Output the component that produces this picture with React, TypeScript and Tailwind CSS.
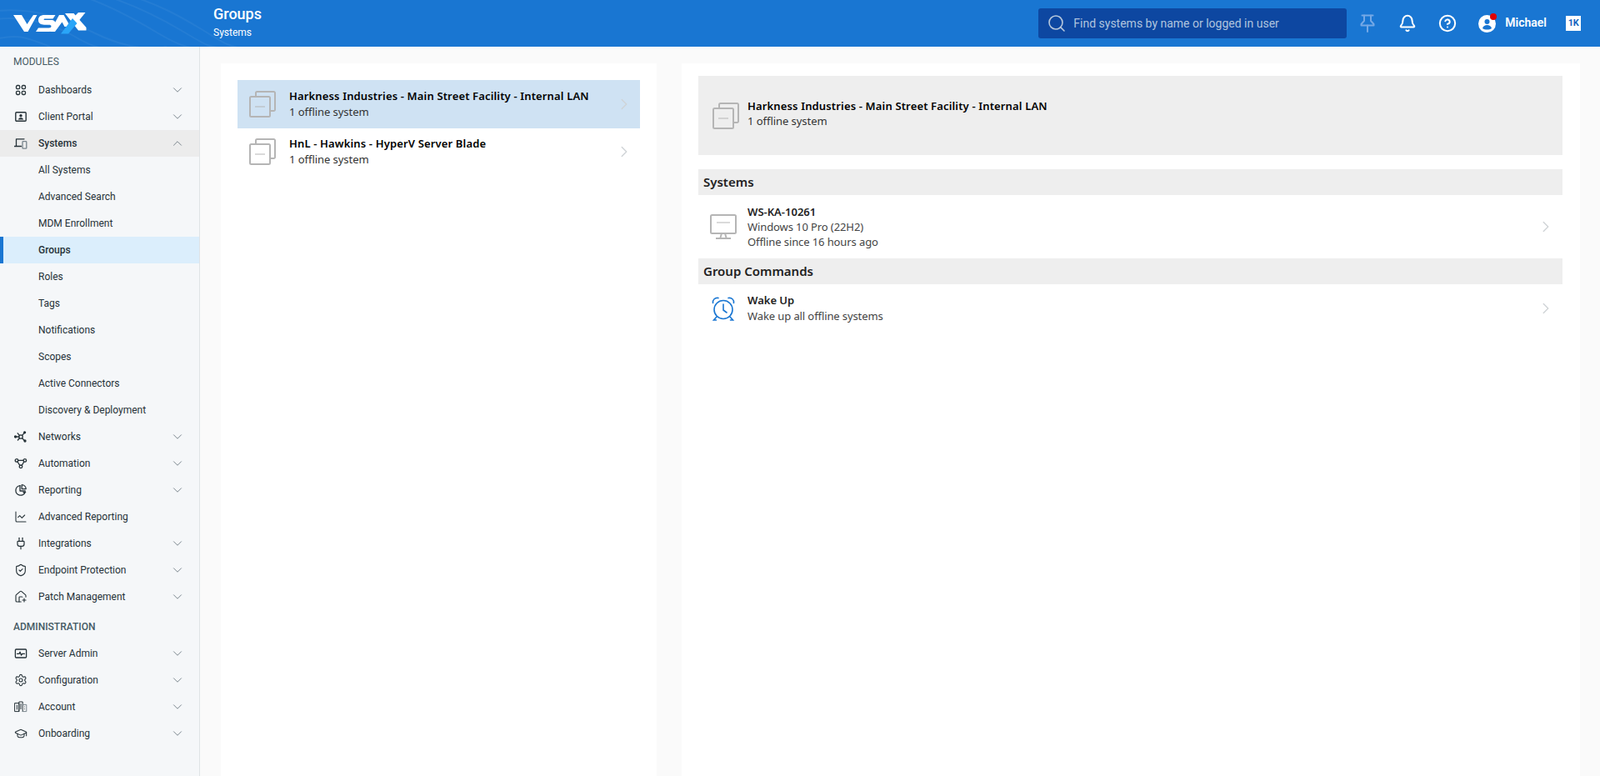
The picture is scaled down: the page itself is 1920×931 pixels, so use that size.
import type { ReactNode } from "react";
import {
  Bell,
  ChartLine,
  ChevronDown,
  ChevronRight,
  ChevronUp,
  CircleHelp,
  GraduationCap,
  HousePlus,
  Plug,
  Search,
  Settings,
  ShieldCheck,
} from "lucide-react";

const Svg = ({ children }: { children: ReactNode }) => (
  <svg width="16" height="16" viewBox="0 0 16 16" fill="none" stroke="#263238" strokeWidth="1.300" strokeLinecap="round" strokeLinejoin="round">
    {children}
  </svg>
);

const DashIcon = () => (
  <Svg>
    <rect x="2.500" y="2.500" width="4.200" height="4.200" rx="1.400" />
    <rect x="9.300" y="2.500" width="4.200" height="4.200" rx="1.400" />
    <rect x="2.500" y="9.300" width="4.200" height="4.200" rx="1.400" />
    <rect x="9.300" y="9.300" width="4.200" height="4.200" rx="1.400" />
  </Svg>
);
const PortalIcon = () => (
  <Svg>
    <rect x="1.800" y="2.800" width="12.400" height="10.400" rx="1" strokeWidth="1.400" />
    <circle cx="8" cy="6.800" r="1.700" fill="#263238" stroke="none" />
    <path d="M4.800 11.400c.5-1.600 1.700-2.200 3.200-2.200s2.700.6 3.200 2.200z" fill="#263238" stroke="none" />
  </Svg>
);
const SystemsIcon = () => (
  <Svg>
    <path d="M2.500 11V2.800h9.500" />
    <path d="M.5 11.500h8" />
    <rect x="10" y="5.600" width="4.800" height="8.600" rx="0.800" stroke="#78848c" />
  </Svg>
);
const NetworkIcon = () => (
  <Svg>
    <circle cx="8" cy="8" r="2.200" />
    <path d="M6.400 6.400 4.200 3.800M9.600 6.400l2.200-2.600M9.600 9.600l2.400 2.600M6.400 9.600 4.400 12M5.800 8H2" />
    <circle cx="12.600" cy="2.800" r="1" fill="#263238" />
    <circle cx="13" cy="13" r="1" fill="#263238" />
    <circle cx="1.500" cy="8" r="1" fill="#263238" />
  </Svg>
);
const AutomationIcon = () => (
  <Svg>
    <circle cx="3" cy="4.400" r="1.800" />
    <circle cx="12.800" cy="4.400" r="1.800" />
    <circle cx="8" cy="11.800" r="1.800" />
    <path d="M4.800 4.400h6.200M4 6l2.800 4.400M11.800 6 9.200 10.400" />
  </Svg>
);
const ReportIcon = () => (
  <Svg>
    <path d="M7 2.600a5.800 5.800 0 1 0 6.200 7.600" />
    <path d="M7 2.600V9h6.200" />
    <path d="M9.200 1.600a5.200 5.200 0 0 1 5 5h-5z" />
    <path d="M10 10h4.600l-2.300 2.600z" fill="#263238" stroke="none" />
  </Svg>
);
const ServerAdminIcon = () => (
  <Svg>
    <rect x="1.400" y="3" width="13.200" height="10" rx="1" strokeWidth="1.300" />
    <path d="M3.600 8.400h2.400l1-2.200 1.600 4 1-1.800h2.800" />
  </Svg>
);
const AccountIcon = () => (
  <Svg>
    <rect x="1" y="3.600" width="4.800" height="10" strokeWidth="1" />
    <path d="M5.800 13.600V2h4.400v11.600" strokeWidth="1" />
    <path d="M10.200 5.400h4.600v8.200H10.200" strokeWidth="1" stroke="#78848c" />
    <path d="M3.400 6v5M8 4.600v6M12.400 8h.01M12.400 10.600h.01" strokeWidth="1" />
  </Svg>
);

const lucideCls = "w-[16px] h-[16px] text-[#263238]";

type NavItem = { label: string; icon: ReactNode; chevron?: boolean };

const topItems: NavItem[] = [
  { label: "Dashboards", icon: <DashIcon />, chevron: true },
  { label: "Client Portal", icon: <PortalIcon />, chevron: true },
];

const subItems = ["All Systems", "Advanced Search", "MDM Enrollment", "Groups", "Roles", "Tags", "Notifications", "Scopes", "Active Connectors", "Discovery & Deployment"];

const lowerItems: NavItem[] = [
  { label: "Networks", icon: <NetworkIcon />, chevron: true },
  { label: "Automation", icon: <AutomationIcon />, chevron: true },
  { label: "Reporting", icon: <ReportIcon />, chevron: true },
  { label: "Advanced Reporting", icon: <ChartLine className={lucideCls} strokeWidth={1.6} /> },
  { label: "Integrations", icon: <Plug className={lucideCls} strokeWidth={1.8} />, chevron: true },
  { label: "Endpoint Protection", icon: <ShieldCheck className={lucideCls} strokeWidth={1.7} />, chevron: true },
  { label: "Patch Management", icon: <HousePlus className={lucideCls} strokeWidth={1.7} />, chevron: true },
];

const adminItems: NavItem[] = [
  { label: "Server Admin", icon: <ServerAdminIcon />, chevron: true },
  { label: "Configuration", icon: <Settings className={lucideCls} strokeWidth={1.6} />, chevron: true },
  { label: "Account", icon: <AccountIcon />, chevron: true },
  { label: "Onboarding", icon: <GraduationCap className={lucideCls} strokeWidth={1.6} />, chevron: true },
];

const NavRow = ({ item }: { item: NavItem }) => (
  <div className="flex h-[32px] items-center pl-[17px] pr-[17px] text-[12px] text-[#263238]">
    <span className="flex w-[29px] shrink-0 items-center">{item.icon}</span>
    <span className="flex-1">{item.label}</span>
    {item.chevron && <ChevronDown className="h-[18px] w-[18px] text-[#78848c]" strokeWidth={1.3} />}
  </div>
);

const SectionLabel = ({ children, className }: { children: ReactNode; className: string }) => (
  <div className={`flex items-center pl-[16px] text-[12px] text-[#455a64] ${className}`}>{children}</div>
);

const Sidebar = () => (
  <aside className="w-[240px] shrink-0 border-r border-[#dfe3e6] bg-[#f5f7f9] [font-family:Roboto,sans-serif]">
    <SectionLabel className="h-[36px]">MODULES</SectionLabel>
    {topItems.map((item) => (
      <NavRow key={item.label} item={item} />
    ))}
    <div className="flex h-[32px] items-center bg-[#ececec] pl-[17px] pr-[17px] text-[12px] font-medium text-[#263238]">
      <span className="flex w-[29px] shrink-0 items-center">
        <SystemsIcon />
      </span>
      <span className="flex-1">Systems</span>
      <ChevronUp className="h-[18px] w-[18px] text-[#78848c]" strokeWidth={1.3} />
    </div>
    {subItems.map((label) =>
      label === "Groups" ? (
        <div key={label} className="flex h-[32px] items-center border-l-[4px] border-[#1976d2] bg-[#dbeefc] pl-[42px] text-[12px] font-medium text-[#263238]">
          {label}
        </div>
      ) : (
        <div key={label} className="flex h-[32px] items-center pl-[46px] text-[12px] text-[#263238]">
          {label}
        </div>
      ),
    )}
    {lowerItems.map((item) => (
      <NavRow key={item.label} item={item} />
    ))}
    <SectionLabel className="h-[36px] pt-[4px] font-medium">ADMINISTRATION</SectionLabel>
    {adminItems.map((item) => (
      <NavRow key={item.label} item={item} />
    ))}
  </aside>
);

const Logo = () => (
  <svg width="90" height="28" viewBox="0 0 90 28" className="block">
    <path d="M0 4h10l6.500 11L24 4h4.500L17.500 24h-4.500z" fill="#fff" />
    <path d="M30 10c0-4 3-6 7-6h13.500l-3 4.500H38.500c-1.500 0-2 .3-2 .8s.5.7 2 .7h6.500c4 0 6 2 6 5.500 0 5-3 8.500-8 8.500H27l3-4.500h12.500c2 0 3-.7 3-2s-1-1.800-3-1.800h-5.500c-4 0-7-1.700-7-5.700z" fill="#fff" />
    <path d="M44 24 55 4h5.500l8 14h-7l-3-5.500L50 24z" fill="#fff" />
    <path d="M62 2h10.500l15 17v3.500H78z" fill="#fff" />
    <path d="M76.500 13.500 86.500 1H78l-7 7z" fill="#fff" />
    <path d="M57 26.500h9L76.500 14 71 8z" fill="#2aa5f8" />
  </svg>
);

const PinIcon = () => (
  <svg width="20" height="22" viewBox="0 0 20 22" fill="none" stroke="#74a8e6" strokeWidth="2" strokeLinejoin="round" strokeLinecap="round">
    <path d="M3.500 1.500h13" />
    <path d="M6 1.500v6.500l-3.500 4v1.500h15V12L14 8V1.500" />
    <path d="M10 13.500V21" />
  </svg>
);

const AlarmIcon = () => (
  <svg width="28" height="29" viewBox="0 0 28 29" fill="none" stroke="#1976d2" strokeWidth="1.600" strokeLinecap="round">
    <circle cx="14" cy="15.500" r="11" />
    <path d="M14 9v7l4 3" />
    <path d="M1.500 7.500C1 3.500 4 .8 8 1.500" />
    <path d="M26.500 7.500C27 3.500 24 .8 20 1.500" />
    <path d="M6 24 2.500 28h3M22 24l3.500 4h-3" />
  </svg>
);

const Header = () => (
  <header className="relative flex h-[56px] shrink-0 items-center overflow-hidden bg-[#1976d2] [font-family:Roboto,sans-serif] text-white">
    <svg className="absolute left-0 top-0" width="300" height="56" viewBox="0 0 300 56" fill="none" stroke="#ffffff" strokeOpacity="0.05" strokeWidth="2">
      <path d="M-10 14c40-6 80 4 120 24s70 22 90 18" />
      <path d="M-10 24c30-6 70 2 100 20s40 14 60 14" />
      <path d="M-10 48c30-8 40-4 70 8" />
      <path d="M100-4c30 10 60 26 90 44s40 18 60 18" />
      <path d="M130-4c30 10 60 24 90 42s30 18 50 20" />
      <path d="M160-4c30 10 50 20 80 38s30 20 50 24" />
    </svg>
    <div className="relative w-[256px] shrink-0 pl-[16px]">
      <Logo />
    </div>
    <div className="relative flex-1 pb-[5px]">
      <div className="text-[18px] font-medium leading-[24px]">Groups</div>
      <div className="text-[12px] leading-[16px] mt-[2px]">Systems</div>
    </div>
    <div className="relative flex h-[36px] w-[370px] items-center rounded-[3px] bg-[#0d47a1] pl-[10px]">
      <Search className="h-[24px] w-[24px] text-[#b6c7dc]" strokeWidth={1.6} />
      <span className="ml-[8px] text-[14px] text-[#b0c4de]">Find systems by name or logged in user</span>
    </div>
    <div className="relative flex items-center pl-[15px] pr-[23px]">
      <PinIcon />
      <Bell className="ml-[27px] h-[22px] w-[22px]" strokeWidth={2.2} />
      <CircleHelp className="ml-[26px] h-[22px] w-[22px]" strokeWidth={2.2} />
      <span className="relative ml-[26px] flex h-[21px] w-[21px] items-center justify-center rounded-full bg-white">
        <svg width="21" height="21" viewBox="0 0 21 21">
          <circle cx="10.500" cy="8" r="3" fill="#1976d2" />
          <path d="M5 16c1-3 3-4 5.500-4s4.500 1 5.500 4c-3 2-8 2-11 0z" fill="#1976d2" />
        </svg>
        <span className="absolute right-[-1px] top-[-2px] h-[8px] w-[8px] rounded-full bg-[#e00000]" />
      </span>
      <span className="ml-[11px] text-[14px] font-semibold pb-[2px]">Michael</span>
      <span className="ml-[23px] flex h-[18px] w-[18px] items-center justify-center bg-white text-[11px] font-bold tracking-[-0.5px] text-[#1565c0]">1K</span>
    </div>
  </header>
);

const GroupIcon = () => (
  <svg width="32" height="32" viewBox="0 0 32 32" fill="none" stroke="#b5b5b5" strokeWidth="2" strokeLinejoin="round" className="shrink-0">
    <path d="M8 7V2.500A1.500 1.500 0 0 1 9.500 1h20A1.500 1.500 0 0 1 31 2.500v20a1.500 1.500 0 0 1-1.500 1.500H25" />
    <rect x="1" y="7" width="24" height="24" rx="1.500" />
    <path d="M7 19h12" strokeWidth="1" />
  </svg>
);

const MonitorIcon = () => (
  <svg width="32" height="30" viewBox="0 0 32 30" fill="none" stroke="#b5b5b5" strokeWidth="2" className="shrink-0">
    <rect x="1" y="1" width="30" height="22" rx="1.500" />
    <path d="M8 10h16" strokeWidth="1" />
    <path d="M14 23l-1.500 5M18 23l1.500 5" />
    <path d="M7 29h18" />
  </svg>
);

const RowChevron = () => <ChevronRight className="h-[22px] w-[22px] shrink-0 text-[#cfd3d6]" strokeWidth={1.5} />;

const GroupRow = ({ title, active }: { title: string; active?: boolean }) => (
  <div className={`flex h-[57.500px] items-center pl-[14px] pr-[8px] ${active ? "bg-[#cfe2f3]" : ""}`}>
    <GroupIcon />
    <div className="ml-[16px] flex-1 leading-[19px]">
      <div className="text-[13px] font-semibold tracking-[0.15px] text-black">{title}</div>
      <div className="text-[13px] tracking-[-0.05px] text-[#333]">1 offline system</div>
    </div>
    <RowChevron />
  </div>
);

const SectionHead = ({ children }: { children: ReactNode }) => (
  <div className="flex h-[31px] items-center bg-[#eeeeee] pl-[6px] text-[15px] font-semibold text-[#222]">{children}</div>
);

const Content = () => (
  <main className="flex flex-1 gap-[30px] overflow-hidden bg-[#fafafa] pl-[25px] pr-[24px] pt-[20px] [font-family:'Open_Sans',sans-serif]">
    <section className="w-[523px] shrink-0 bg-white px-[20px] pt-[20px]">
      <GroupRow title="Harkness Industries - Main Street Facility - Internal LAN" active />
      <GroupRow title="HnL - Hawkins - HyperV Server Blade" />
    </section>
    <section className="flex-1 bg-white pl-[20px] pr-[21px] pt-[15px]">
      <div className="mb-[17px] flex h-[95px] items-center bg-[#eeeeee] pl-[17px]">
        <GroupIcon />
        <div className="mb-[5px] ml-[10px] leading-[18px]">
          <div className="text-[13px] font-semibold tracking-[0.15px] text-black">Harkness Industries - Main Street Facility - Internal LAN</div>
          <div className="text-[13px] tracking-[-0.05px] text-[#333]">1 offline system</div>
        </div>
      </div>
      <SectionHead>Systems</SectionHead>
      <div className="flex h-[76px] items-center pl-[14px] pr-[9px]">
        <MonitorIcon />
        <div className="mb-[1px] ml-[13px] flex-1 leading-[18px]">
          <div className="text-[13px] font-semibold text-[#222]">WS-KA-10261</div>
          <div className="text-[13px] tracking-[-0.1px] text-[#444]">Windows 10 Pro (22H2)</div>
          <div className="text-[13px] tracking-[-0.1px] text-[#444]">Offline since 16 hours ago</div>
        </div>
        <RowChevron />
      </div>
      <SectionHead>Group Commands</SectionHead>
      <div className="flex h-[58px] items-center pl-[14px] pr-[9px]">
        <span className="flex w-[32px] justify-center">
          <AlarmIcon />
        </span>
        <div className="ml-[13px] flex-1 leading-[19px]">
          <div className="text-[13px] font-semibold text-[#222]">Wake Up</div>
          <div className="text-[13px] tracking-[-0.1px] text-[#444]">Wake up all offline systems</div>
        </div>
        <RowChevron />
      </div>
    </section>
  </main>
);

export default function App() {
  return (
    <div className="flex h-screen flex-col overflow-hidden">
      <Header />
      <div className="flex min-h-0 flex-1">
        <Sidebar />
        <Content />
      </div>
    </div>
  );
}
